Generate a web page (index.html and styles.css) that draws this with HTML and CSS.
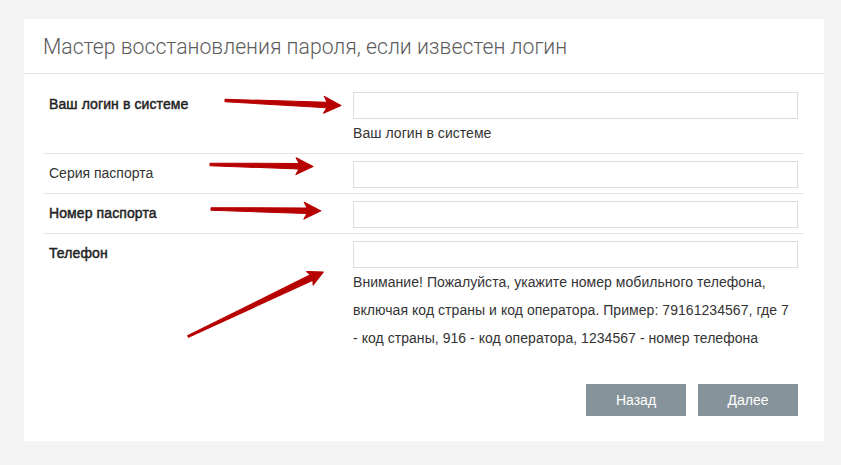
FILE: index.html
```html
<!DOCTYPE html>
<html lang="ru">
  <head>
    <meta charset="UTF-8" />
    <title>Восстановление пароля</title>
    <link rel="stylesheet" href="styles.css">
  </head>
  <body>
    <div class="wizard">
      <!-- заголовок мастера -->
      <div class="wizard-header">
        <h1>Мастер восстановления пароля, если известен логин</h1>
      </div>

      <form class="wizard-form">
        <div class="field-row">
          <label class="field-label strong">Ваш логин в системе</label>
          <div class="field-control">
            <input type="text" />
            <p class="field-hint">Ваш логин в системе</p>
          </div>
        </div>

        <div class="field-row">
          <label class="field-label">Серия паспорта</label>
          <div class="field-control">
            <input type="text" />
          </div>
        </div>

        <div class="field-row">
          <label class="field-label strong">Номер паспорта</label>
          <div class="field-control">
            <input type="text" />
          </div>
        </div>

        <div class="field-row">
          <label class="field-label strong">Телефон</label>
          <div class="field-control">
            <input type="text" />
            <p class="field-hint">Внимание! Пожалуйста, укажите номер мобильного телефона, включая код страны и код оператора. Пример: 79161234567, где 7 - код страны, 916 - код оператора, 1234567 - номер телефона</p>
          </div>
        </div>
      </form>

      <div class="wizard-actions">
        <button type="button" class="btn">Назад</button>
        <button type="button" class="btn">Далее</button>
      </div>
    </div>

    <!-- стрелки поверх формы -->
    <svg class="arrows" width="841" height="465" viewBox="0 0 841 465">
      <g fill="#b70000" stroke="#b70000" stroke-width="1" stroke-linejoin="round">
        <g transform="translate(225,100.5) rotate(2.5)">
          <path d="M0,-1.2 L102,-2.8 L99,-8.5 L116,0 L99,8.5 L102,2.8 L0,1.2 Z" />
        </g>
        <g transform="translate(210,164.5) rotate(1.1)">
          <path d="M0,-1.2 L89,-2.8 L86,-8.5 L103,0 L86,8.5 L89,2.8 L0,1.2 Z" />
        </g>
        <g transform="translate(211,209) rotate(1)">
          <path d="M0,-1.2 L96,-2.8 L93,-8.5 L110,0 L93,8.5 L96,2.8 L0,1.2 Z" />
        </g>
        <g transform="translate(188,336.5) rotate(-25.5)">
          <path d="M0,-1 L137,-3 L135,-7.5 L150,0 L135,7.5 L137,3 L0,1 Z" />
        </g>
      </g>
    </svg>
  </body>
</html>
```

FILE: styles.css
```css
/* общие стили */
body {
  margin: 0;
  padding: 19px 0 0 24px;
  height: 465px;
  box-sizing: border-box;
  overflow: hidden;
  background: #f3f3f3;
  font-family: "Liberation Sans", Arial, sans-serif;
  font-size: 14px;
  color: #333333;
}

/* карточка мастера */
.wizard {
  width: 800px;
  background: #ffffff;
  padding-bottom: 25px;
}

.wizard-header {
  height: 54px;
  display: flex;
  align-items: center;
  padding: 0 19px;
  border-bottom: 1px solid #e3e3e3;
}

.wizard-header h1 {
  margin: 0;
  font-family: Roboto, "Liberation Sans", sans-serif;
  font-weight: 300;
  font-size: 21.2px;
  color: #5c5c5c;
}

/* строки формы */
.wizard-form {
  padding: 11px 20px 0 19px;
}

.field-row {
  display: grid;
  grid-template-columns: 304px 1fr;
  padding: 7px 6px 5px;
  border-bottom: 1px solid #e5e5e5;
}

.field-row:last-child {
  border-bottom: none;
}

.field-label {
  padding-top: 2px;
  line-height: 20px;
  color: #333333;
}

/* «полужирные» подписи — обычный шрифт с обводкой */
.field-label.strong {
  color: #222222;
  letter-spacing: 0.1px;
  -webkit-text-stroke: 0.45px #222222;
}

.field-control input {
  display: block;
  width: 100%;
  height: 27px;
  box-sizing: border-box;
  margin: 0;
  border: 1px solid #dddddd;
  background: #ffffff;
}

.field-hint {
  margin: 0 0 1px;
  max-width: 438px;
  line-height: 28px;
  letter-spacing: 0.05px;
  color: #333333;
}

/* кнопки */
.wizard-actions {
  display: flex;
  justify-content: flex-end;
  gap: 12px;
  padding: 26px 26px 0 0;
}

.btn {
  width: 100px;
  height: 32px;
  border: none;
  background: #87939a;
  color: #ffffff;
  font-family: "Liberation Sans", Arial, sans-serif;
  font-size: 14px;
}

/* стрелки */
.arrows {
  position: absolute;
  top: 0;
  left: 0;
  pointer-events: none;
}
```
